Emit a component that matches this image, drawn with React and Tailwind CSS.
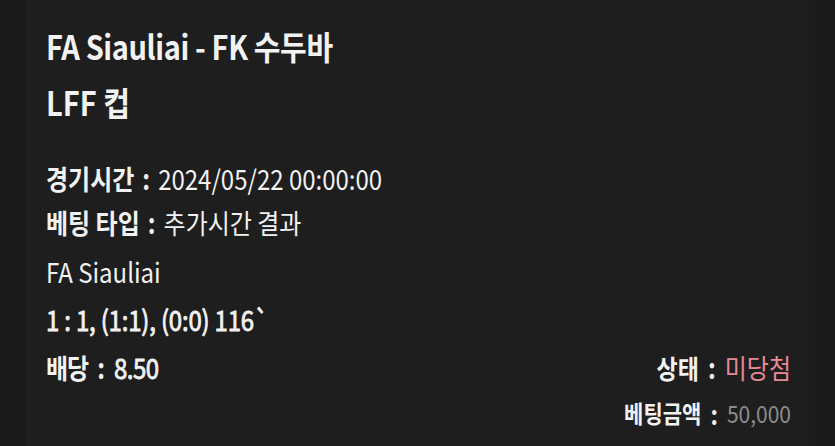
export default function App() {
  const font = { fontFamily: '"Noto Sans CJK KR", "Noto Sans", sans-serif' };
  const t = "inline-block scale-y-[1.14]";
  const med = "[-webkit-text-stroke:0.7px_#f2f2f2]";
  return (
    <div className="w-[835px] h-[446px] bg-[#1e1e1e] flex overflow-hidden" style={font}>
      <div className="w-[26px] h-full bg-[#1b1b1b]" />
      <div className="flex-1 flex flex-col pl-[20px] pr-[18px] pt-[22px] text-[#f2f2f2]">
        <div className="h-[48px] flex items-center text-[29px] font-bold tracking-[-0.4px]">
          <span className={t}>FA Siauliai - FK 수두바</span>
        </div>
        <div className="h-[48px] mt-[8px] flex items-center text-[29px] font-bold">
          <span className={t}>LFF 컵</span>
        </div>
        <div className="h-[44px] mt-[31px] flex items-center text-[24px]">
          <span className={`${t} font-bold`}>경기시간</span>
          <span className={`${t} font-bold mx-[8px]`}>:</span>
          <span className={t}>2024/05/22 00:00:00</span>
        </div>
        <div className="h-[44px] flex items-center text-[24px]">
          <span className={`${t} font-bold`}>베팅 타입</span>
          <span className={`${t} font-bold mx-[8px]`}>:</span>
          <span className={t}>추가시간 결과</span>
        </div>
        <div className="h-[48px] mt-[3px] flex items-center text-[24px]">
          <span className={t}>FA Siauliai</span>
        </div>
        <div className="h-[48px] flex items-center text-[24px] tracking-[-0.2px]">
          <span className={`${t} ${med}`}>1 : 1, (1:1), (0:0) 116`</span>
        </div>
        <div className="h-[48px] flex items-center justify-between text-[24px]">
          <div className="flex items-center">
            <span className={`${t} font-bold tracking-[-1px]`}>배당</span>
            <span className={`${t} font-bold mx-[9px]`}>:</span>
            <span className={`${t} ${med} tracking-[-0.5px]`}>8.50</span>
          </div>
          <div className="flex items-center">
            <span className={`${t} font-bold text-[23px]`}>상태</span>
            <span className={`${t} font-bold mx-[9px]`}>:</span>
            <span className={`${t} text-[#e88a95]`}>미당첨</span>
          </div>
        </div>
        <div className="h-[44px] flex items-center justify-end text-[21px]">
          <span className={`${t} font-bold`}>베팅금액</span>
          <span className={`${t} font-bold mx-[9px] text-[23px]`}>:</span>
          <span className={`${t} text-[#8c8c8c]`}>50,000</span>
        </div>
      </div>
      <div className="w-[26px] h-full bg-[#1b1b1b]" />
    </div>
  );
}
